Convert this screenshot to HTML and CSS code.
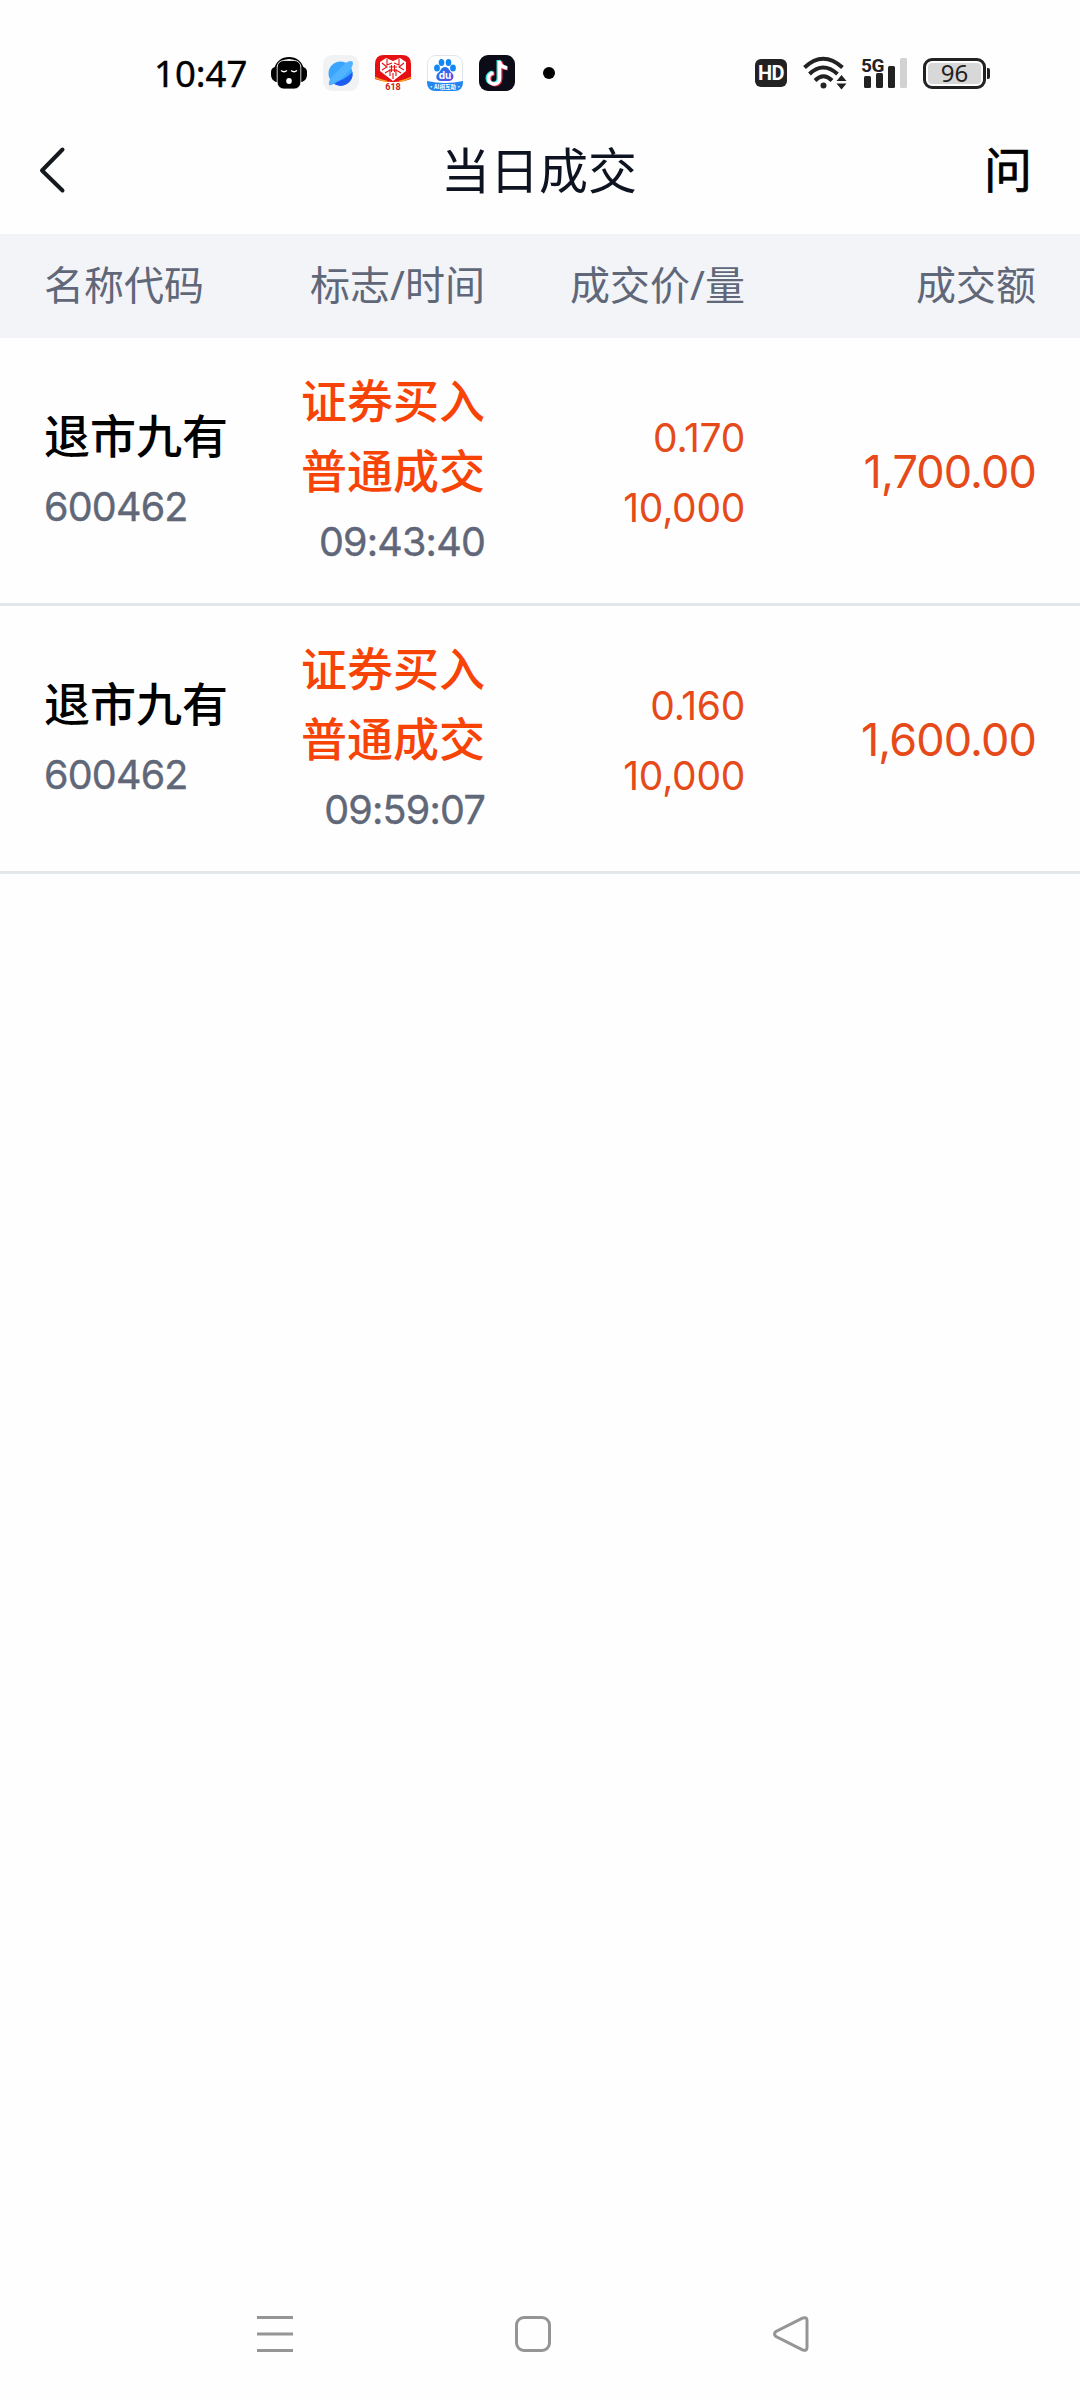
FILE: index.html
```html
<!DOCTYPE html>
<html lang="zh-CN">

<head>
  <meta charset="UTF-8">
  <meta name="viewport" content="width=device-width, initial-scale=1.0">
  <title>当日成交</title>

  <link rel="stylesheet" href="styles.css">
</head>

<body>
  <div class="status-bar">
    <span class="clock">10:47</span>
    <div class="status-apps">
      <!-- music -->
      <svg width="36" height="36" viewBox="0 0 36 36">
        <path d="M4 15C6 -1 30 -1 32 15" fill="none" stroke="#000" stroke-width="2" />
        <path d="M7 12h-3q-4 1-4 5v3q0 5 5 7h2zM29 12h3q4 1 4 5v3q0 5-5 7h-2z" />
        <rect x="6.200" y="5.500" width="23.600" height="28.500" rx="6.500" stroke="#fff" stroke-width=".8" />
        <path d="M10 15.500q3 2.500 6 0M20 15.500q3 2.500 6 0" fill="none" stroke="#fff" stroke-width="1.300" />
        <ellipse cx="18" cy="26" rx="2.800" ry="3" fill="#fff" />
      </svg>
      <!-- browser -->
      <svg width="36" height="36" viewBox="0 0 36 36">
        <rect width="36" height="36" rx="9" fill="#f1f2f4" />
        <circle cx="17.500" cy="18.500" r="12" fill="#3aa5ff" />
        <path d="M29.500 17A12 12 0 0 1 10 28Q22 25 29.500 17z" fill="#1d5ef0" />
        <path d="M23 7.500Q29 4.500 30 7.500Q30.500 13 21 21.500Q11 30 6.500 30.500Q4.500 28 8 23z" fill="#4fb3ff" />
      </svg>
      <!-- shopping, 618 sale -->
      <svg width="36" height="36" viewBox="0 0 36 36">
        <path d="M0 24V9Q0 0 9 0H27Q36 0 36 9V24Q28 27 18 27Q8 27 0 24z" fill="#e60f12" />
        <path d="M0 22.500Q6 25.500 12 26.500M36 22.500Q30 25.500 24 26.500" stroke="#ffa21a" stroke-width="1.500" fill="none" />
        <path d="M18 26L5 16V7L11 3L18 6L25 3L31 7V16z" fill="#fff" />
        <path d="M7 8l5 4-5 3M12 4v6l5-2M29 8l-5 4 5 3M24 4v6l-5-2M10 18l5-3v6M26 18l-5-3v6M18 18v6M14 12h8M14 15h8M16.500 10v7M19.500 10v7" stroke="#e60f12" stroke-width="1.100" fill="none" />
        <text x="18" y="34.800" class="sale-label">618</text>
      </svg>
      <!-- baidu -->
      <svg width="36" height="36" viewBox="0 0 36 36">
        <defs>
          <linearGradient id="paw" x1="0" y1="0" x2="1" y2="1">
            <stop offset="0" stop-color="#0b83ef" />
            <stop offset="1" stop-color="#6244e8" />
          </linearGradient>
        </defs>
        <rect x=".5" y=".5" width="35" height="35" rx="8.500" fill="#fff" stroke="#dfe5ea" />
        <ellipse cx="10" cy="13" rx="2.900" ry="3.600" fill="#1487f2" />
        <ellipse cx="14.500" cy="7.500" rx="2.800" ry="3.600" fill="#1487f2" />
        <ellipse cx="21.500" cy="7.500" rx="2.800" ry="3.600" fill="#1487f2" />
        <ellipse cx="26" cy="13" rx="2.900" ry="3.600" fill="#1487f2" />
        <path d="M18 12C22 12 22 16 25 18C28 21 26 26 22 26H14C9 26 8 21 11 18C14 16 14 12 18 12z" fill="url(#paw)" />
        <text x="18" y="23.500" class="baidu-label">du</text>
        <path d="M0 26Q18 30 36 26V27Q36 36 27 36H9Q0 36 0 27z" fill="#2585ee" />
        <text x="18" y="34" class="baidu-tag">·AI相互助·</text>
      </svg>
      <!-- tiktok -->
      <svg width="36" height="36" viewBox="0 0 36 36">
        <rect width="36" height="36" rx="9" fill="#0c0b18" />
        <g fill="none" stroke-width="4">
          <path d="M19.500 5V22.500A5.500 5.500 0 1 1 13.500 17.500M19.500 5Q20 11.500 27 12.500" stroke="#2fe6e4" />
          <path d="M21.500 6.500V24A5.500 5.500 0 1 1 15.500 18.500M21.500 6.500Q22 13 29 13.500" stroke="#f5305c" />
          <path d="M20.500 6V23A5.500 5.500 0 1 1 14.500 18M20.500 6Q21 12 28 13" stroke="#fff" stroke-width="3.500" />
        </g>
      </svg>
    </div>
    <span class="more-dot"></span>

    <div class="status-system">
      <span class="hd">HD</span>
      <svg class="wifi" width="44" height="36" viewBox="0 0 44 36">
        <g fill="none" stroke="#222" stroke-width="4">
          <path d="M1.500 12.500Q20 -5 39.500 12.500" />
          <path d="M6.500 19Q20 6 34.500 19" />
          <path d="M12 25.500Q20.500 17 29 25.500" />
        </g>
        <circle cx="20.500" cy="30.500" r="3" fill="#222" />
        <path d="M38.500 20l5 6h-10zM38.500 34.500l5-6h-10z" fill="#222" />
      </svg>
      <svg class="signal" width="48" height="36" viewBox="0 0 48 36">
        <text x="0" y="16.500" class="signal-label">5G</text>
        <g fill="#222">
          <rect x="3" y="21" width="7" height="12" rx="1.500" />
          <rect x="15" y="18" width="7" height="15" rx="1.500" />
          <rect x="27" y="11" width="7" height="22" rx="1.500" />
        </g>
        <rect x="39" y="3" width="7" height="30" rx="1.500" fill="#d2d2d2" />
      </svg>
      <div class="battery"><span>96</span></div>
      <span class="battery-tip"></span>
    </div>
  </div>

  <header>
    <svg class="back" width="28" height="48" viewBox="0 0 28 48">
      <path d="M24.500 3.500L4 24.500L24.500 44.500" fill="none" stroke="#15181c" stroke-width="4" stroke-linecap="round" stroke-linejoin="round" />
    </svg>
    <h1>当日成交</h1>
    <span class="ask">问</span>
  </header>

  <main>
    <div class="row table-head">
      <span>名称代码</span>
      <span>标志/时间</span>
      <span>成交价/量</span>
      <span>成交额</span>
    </div>

    <div class="row deal">
      <div>
        <p class="name">退市九有</p>
        <p class="code">600462</p>
      </div>
      <div>
        <p class="flag">证券买入</p>
        <p class="flag">普通成交</p>
        <p class="time">09:43:40</p>
      </div>
      <div>
        <p class="price">0.170</p>
        <p class="price">10,000</p>
      </div>
      <div>
        <p class="amount">1,700.00</p>
      </div>
    </div>

    <div class="row deal">
      <div>
        <p class="name">退市九有</p>
        <p class="code">600462</p>
      </div>
      <div>
        <p class="flag">证券买入</p>
        <p class="flag">普通成交</p>
        <p class="time">09:59:07</p>
      </div>
      <div>
        <p class="price">0.160</p>
        <p class="price">10,000</p>
      </div>
      <div>
        <p class="amount">1,600.00</p>
      </div>
    </div>
  </main>

  <nav>
    <svg width="36" height="36" viewBox="0 0 36 36">
      <path d="M0 1.500H36M0 18H36M0 34.500H36" />
    </svg>
    <svg width="36" height="36" viewBox="0 0 36 36">
      <rect x="1.500" y="1.500" width="33" height="33" rx="7.500" />
    </svg>
    <svg width="36" height="36" viewBox="0 0 36 36">
      <path d="M29.500 2.200L3 15.500Q0 18 3 20.500L29.500 33.800Q34 35.500 34 31.500V4.500Q34 .5 29.500 2.200z" />
    </svg>
  </nav>
</body>

</html>
```

FILE: styles.css
```css
* {
  box-sizing: border-box;
}

body {
  background: #fefefe;
  color: #000;
  display: flex;
  flex-direction: column;
  font-family: "Noto Sans", "Noto Sans CJK SC", sans-serif;
  height: 2400px;
  margin: 0;
  width: 1080px;
}

h1,
p {
  margin: 0;
}

svg {
  display: block;
}

/* status bar */
.status-bar {
  align-items: center;
  display: flex;
  height: 106px;
  padding: 40px 90px 0 154px;
}

.clock {
  font-size: 36.5px;
  font-weight: 400;
  line-height: 66px;
  width: 117px;
  -webkit-text-stroke: 0.4px #000;
}

.status-apps {
  display: flex;
  gap: 16px;
}

.more-dot {
  background: #000;
  border-radius: 50%;
  height: 12px;
  margin-left: 28px;
  width: 12px;
}

.status-system {
  align-items: center;
  display: flex;
  margin-left: auto;
}

.hd {
  background: #222;
  border-radius: 6px;
  color: #fff;
  font-family: Roboto, sans-serif;
  font-size: 20px;
  font-weight: 700;
  height: 28px;
  letter-spacing: -0.5px;
  line-height: 29px;
  text-align: center;
  width: 32px;
}

.wifi {
  margin-left: 16px;
}

.signal {
  margin-left: 14px;
  overflow: visible;
}

.battery {
  background: #d8d8d8;
  border: 3px solid #222;
  border-radius: 9px;
  box-shadow: inset 0 0 0 2px #fefefe;
  color: #222;
  font-size: 24px;
  height: 31px;
  line-height: 24px;
  margin-left: 14px;
  text-align: center;
  width: 63px;
}

.battery-tip {
  background: #222;
  border-radius: 0 2px 2px 0;
  height: 11px;
  margin-left: 1px;
  width: 3px;
}

.sale-label {
  fill: #c8201c;
  font: 700 9px Roboto, sans-serif;
  text-anchor: middle;
}

.baidu-label {
  fill: #fff;
  font: 700 10px Inter, sans-serif;
  text-anchor: middle;
}

.baidu-tag {
  fill: #fff;
  font: 700 5.5px "Noto Sans CJK SC", sans-serif;
  text-anchor: middle;
}

.signal-label {
  fill: #222;
  font: 700 19px Roboto, sans-serif;
  letter-spacing: -0.5px;
}

/* title */
header {
  align-items: center;
  display: flex;
  height: 128px;
  justify-content: space-between;
  padding: 0 48px 0 38px;
}

h1 {
  color: #0d1320;
  font-size: 49px;
  font-weight: 400;
  line-height: 70px;
}

.back {
  margin-right: 28px;
}

.ask {
  font-size: 48px;
  line-height: 70px;
  -webkit-text-stroke: 0.7px #000;
}

/* table */
.row {
  align-items: center;
  display: grid;
  grid-template-columns: 200px 241px 260px 291px;
  padding: 0 44px;
  text-align: right;
}

.row > :first-child {
  text-align: left;
}

.table-head {
  background: #f2f4f8;
  color: #5f6778;
  font-size: 40px;
  height: 104px;
  padding-bottom: 6px;
}

.deal {
  border-bottom: 3px solid #e4e7ea;
  height: 268px;
}

.deal p {
  height: 70px;
  line-height: 70px;
}

.deal .name,
.deal .flag {
  font-size: 46px;
  font-weight: 500;
  line-height: 68px;
}

.flag {
  color: #f84307;
}

.deal .code,
.deal .time {
  color: #5f6778;
  font-family: Inter, sans-serif;
  font-size: 39.5px;
  letter-spacing: -0.8px;
  line-height: 73px;
  -webkit-text-stroke: 0.4px #5f6778;
}

.deal .price {
  color: #e64a19;
  font-family: Inter, sans-serif;
  font-size: 39px;
  letter-spacing: -0.3px;
  line-height: 73px;
}

.deal .amount {
  color: #e64a19;
  font-family: Inter, sans-serif;
  font-size: 45px;
  letter-spacing: -0.9px;
  line-height: 71px;
}

/* system navigation */
nav {
  display: flex;
  gap: 222px;
  margin-top: auto;
  padding: 0 0 48px 257px;
}

nav svg {
  fill: none;
  stroke: #959595;
  stroke-width: 3;
}
```
